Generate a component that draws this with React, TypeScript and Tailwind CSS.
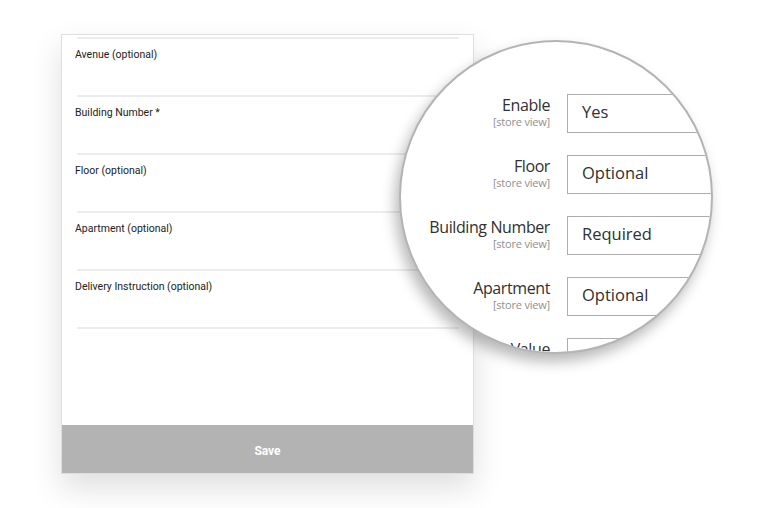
import React from 'react';

const fields = [
  'Avenue (optional)',
  'Building Number *',
  'Floor (optional)',
  'Apartment (optional)',
  'Delivery Instruction (optional)',
];

const settings = [
  { label: 'Enable', value: 'Yes' },
  { label: 'Floor', value: 'Optional' },
  { label: 'Building Number', value: 'Required' },
  { label: 'Apartment', value: 'Optional' },
  { label: 'Value', value: '' },
];

function AddressForm() {
  return (
    <div className="w-[413px] h-[440px] flex flex-col bg-white border border-[#dedede] shadow-[0_14px_30px_rgba(0,0,0,0.13)] font-['Roboto',sans-serif]">
      <div className="flex-1 pt-[2px]">
        <div className="h-[2px] bg-[#ececec] ml-[15px] mr-[14px]"></div>
        {fields.map((f) => (
          <div key={f}>
            <div className="h-[56px] pt-[9px] pl-[13px] text-[10.5px] leading-[14px] text-[#222]">{f}</div>
            <div className="h-[2px] bg-[#ececec] ml-[15px] mr-[14px]"></div>
          </div>
        ))}
      </div>
      <button className="h-[48px] w-full bg-[#b3b3b3] text-white text-[12px] font-bold pt-[3px]">Save</button>
    </div>
  );
}

function Magnifier() {
  return (
    <div className="absolute left-[399px] top-[40px] w-[314px] h-[314px] rounded-full overflow-hidden bg-white border-2 border-[#b4b4b4] shadow-[-4px_8px_14px_rgba(0,0,0,0.28)] font-['Open_Sans',sans-serif]">
      <div className="flex flex-col gap-[22px] pt-[52px]">
        {settings.map((s) => (
          <div key={s.label} className="flex gap-[17px]">
            <div className="w-[149px] shrink-0 text-right pt-[2px]">
              <div className="text-[16px] leading-[19px] text-[#303030] tracking-[-0.4px] whitespace-nowrap">{s.label}</div>
              <div className="text-[11px] leading-[13px] text-[#8f8f8f] tracking-[-0.2px] whitespace-nowrap">[store view]</div>
            </div>
            <div className="w-[220px] h-[39px] shrink-0 border border-[#adadad] flex items-center pl-[14px] pb-[3px] text-[16.5px] text-[#303030]">
              {s.value}
            </div>
          </div>
        ))}
      </div>
    </div>
  );
}

export default function App() {
  return (
    <div className="relative w-[768px] h-[508px] bg-white pt-[34px] pl-[61px]">
      <AddressForm />
      <Magnifier />
    </div>
  );
}
